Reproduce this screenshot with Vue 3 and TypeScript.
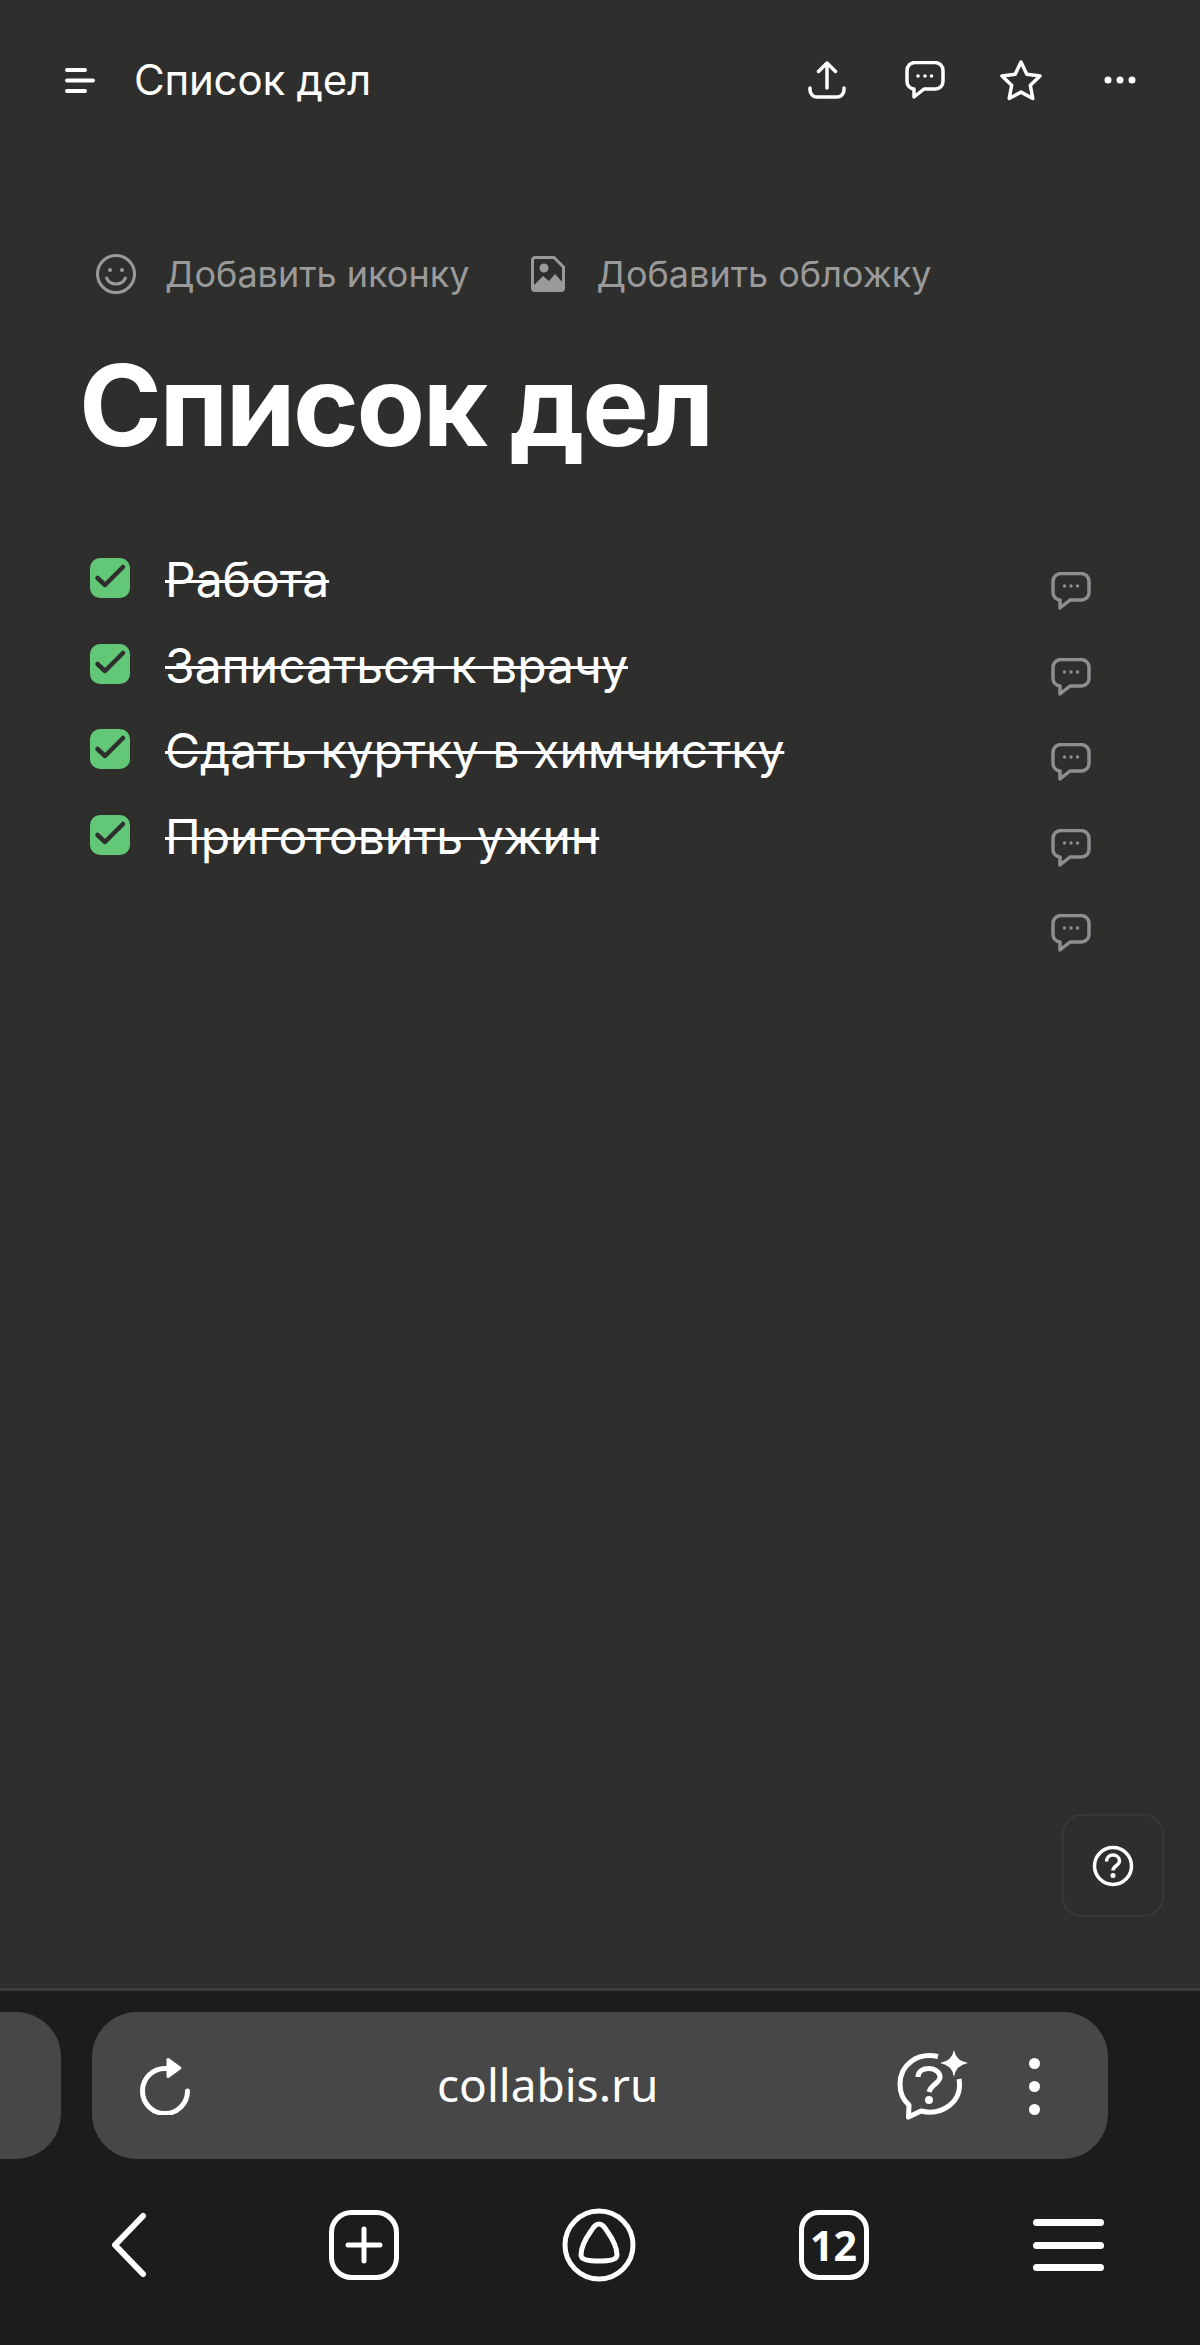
<template>
  <div class="screen">
    <main class="page">
      <header class="topbar">
        <svg class="menu-icon" width="30" height="26" viewBox="0 0 30 26">
          <path d="M2 3h18M2 13.500h26M2 24h18" />
        </svg>
        <span class="topbar-title">Список дел</span>
        <div class="topbar-actions">
          <svg width="38" height="38" viewBox="0 0 38 38" class="line-icon upload">
            <path d="M19 2v25M10.500 10.500 19 2l8.500 8.500M2 27v2a7 7 0 0 0 7 7h20a7 7 0 0 0 7-7v-2" />
          </svg>
          <svg width="40" height="38" viewBox="0 0 40 38" class="line-icon">
            <path d="M10 1.500h20a8 8 0 0 1 8 8v11a7.500 7.500 0 0 1-7.500 7.500H19l-10 8v-8a7.500 7.500 0 0 1-7-7.500v-11a8 8 0 0 1 8-8z" />
            <circle cx="13" cy="15" r="1.800" class="dot" />
            <circle cx="20" cy="15" r="1.800" class="dot" />
            <circle cx="26.500" cy="15" r="1.800" class="dot" />
          </svg>
          <svg width="44" height="42" viewBox="0 0 44 42" class="line-icon star">
            <path d="M22 3l5.800 12.200 13.200 1.800-9.700 9.200 2.500 13.300L22 33.100 10.200 39.500l2.500-13.300L3 17l13.200-1.800z" />
          </svg>
          <svg width="32" height="8" viewBox="0 0 32 8" class="more">
            <circle cx="4" cy="4" r="3.500" class="dot" />
            <circle cx="16" cy="4" r="3.500" class="dot" />
            <circle cx="28" cy="4" r="3.500" class="dot" />
          </svg>
        </div>
      </header>

      <div class="cover-actions">
        <div class="cover-action">
          <svg width="40" height="40" viewBox="0 0 40 40" class="grey-icon">
            <circle cx="20" cy="20" r="18.500" />
            <circle cx="14" cy="16" r="2" class="grey-dot" />
            <circle cx="26" cy="16" r="2" class="grey-dot" />
            <path d="M10.500 24c2 4 5.500 6 9.500 6s7.500-2 9.500-6" />
          </svg>
          <span>Добавить иконку</span>
        </div>
        <div class="cover-action">
          <svg width="34" height="36" viewBox="0 0 34 36" class="grey-icon image-icon">
            <path d="M4 1.500h19L32.500 11v21a2.500 2.500 0 0 1-2.500 2.500H4A2.500 2.500 0 0 1 1.500 32V4A2.500 2.500 0 0 1 4 1.500z" />
            <circle cx="13" cy="12" r="4.500" class="grey-dot" />
            <path class="grey-dot" d="M2 30l10-10 6 5 6-7 8 9v6H2z" />
          </svg>
          <span>Добавить обложку</span>
        </div>
      </div>

      <h1 class="doc-title">Список дел</h1>

      <ul class="tasks">
        <li v-for="(task, i) in tasks" :key="i" class="task">
          <template v-if="task">
            <span class="check">
              <svg width="40" height="40" viewBox="0 0 40 40">
                <path d="M7.500 20l7.500 7L33 9" />
              </svg>
            </span>
            <span class="task-text">{{ task }}</span>
          </template>
          <svg width="40" height="38" viewBox="0 0 40 38" class="comment">
            <path d="M10 1.500h20a8 8 0 0 1 8 8v11a7.500 7.500 0 0 1-7.500 7.500H19l-10 8v-8a7.500 7.500 0 0 1-7-7.500v-11a8 8 0 0 1 8-8z" />
            <circle cx="13.500" cy="14" r="1.700" />
            <circle cx="20" cy="14" r="1.700" />
            <circle cx="26.500" cy="14" r="1.700" />
          </svg>
        </li>
      </ul>

      <button class="help">
        <svg width="42" height="42" viewBox="0 0 42 42">
          <circle cx="21" cy="21" r="18.500" class="help-ring" />
          <path class="help-ring" d="M14.500 16.500c0-4 3-6.500 6.500-6.500s6.500 2.500 6.500 6c0 4.500-6.500 5-6.500 9.500" />
          <circle cx="21" cy="30.500" r="2.500" class="dot" />
        </svg>
      </button>
    </main>

    <footer class="browser">
      <div class="address-row">
        <div class="prev-tab" />
        <div class="address">
          <svg width="50" height="58" viewBox="0 0 50 58" class="reload">
            <path d="M47.500 34A22.500 22.500 0 1 1 25 11.500h3" />
            <path class="solid" d="M26.500 2.500a1.500 1.500 0 0 1 2.400-1.200l11.800 8.500a1.500 1.500 0 0 1 0 2.400L28.900 20.700a1.500 1.500 0 0 1-2.400-1.200z" />
          </svg>
          <span class="url">collabis.ru</span>
          <svg width="72" height="72" viewBox="0 0 72 72" class="ask">
            <path d="M41 6.500C20 2 3 15 3 34c0 9 3 16 9 21l-.5 12L24 61c21 5 42-9 38-32" />
            <path d="M21 27c0-6 5-8.500 11-8.500s11 3.500 11 8.500c0 6-9 7.500-11 15" />
            <circle cx="32" cy="50" r="4" class="solid" />
            <path class="solid" d="M57 0q2 11 14 13-12 2-14 14-2-12-14-14 12-2 14-13z" />
          </svg>
          <div class="kebab">
            <i /><i /><i />
          </div>
        </div>
      </div>

      <nav class="nav">
        <svg width="36" height="66" viewBox="0 0 36 66" class="nav-line nav-back">
          <path d="M32 4 4 33l28 29" />
        </svg>
        <svg width="70" height="70" viewBox="0 0 70 70" class="nav-line nav-thin">
          <rect x="2.500" y="2.500" width="65" height="65" rx="20" />
          <path d="M35 19v32M19 35h32" />
        </svg>
        <svg width="74" height="74" viewBox="0 0 74 74" class="nav-line nav-thin">
          <circle cx="37" cy="37" r="34" />
          <path d="M37 16c3.500 0 5.500 3 8 7 5 7 10 17 10 24 0 5-8 6-18 6s-18-1-18-6c0-7 5-17 10-24 2.500-4 4.500-7 8-7z" />
        </svg>
        <div class="tab-count">12</div>
        <div class="nav-menu">
          <i /><i /><i />
        </div>
      </nav>
    </footer>
  </div>
</template>

<script setup lang="ts">
const tasks: string[] = [
  "Работа",
  "Записаться к врачу",
  "Сдать куртку в химчистку",
  "Приготовить ужин",
  "",
];
</script>

<style scoped>
.screen {
  width: 1200px;
  height: 2345px;
  display: flex;
  flex-direction: column;
  overflow: hidden;
  background: #2e2e2d;
  color: #fff;
  font-family: Inter, "Noto Sans", sans-serif;
}

.page {
  position: relative;
  height: 1988px;
  flex: none;
  background: #2e2e2d;
}

.topbar {
  height: 160px;
  display: flex;
  align-items: center;
  padding: 0 64px 0 65px;
}

.menu-icon path {
  fill: none;
  stroke: #fff;
  stroke-width: 4;
  stroke-linecap: round;
}

.topbar-title {
  margin-left: 39px;
  font-size: 42px;
  line-height: 50px;
  letter-spacing: -0.2px;
}

.topbar-actions {
  margin-left: auto;
  display: flex;
  align-items: center;
  gap: 54px;
}

.upload {
  margin-right: 5px;
}

.more {
  margin-left: 7px;
}

.line-icon path {
  fill: none;
  stroke: #fff;
  stroke-width: 3.5;
  stroke-linecap: round;
  stroke-linejoin: round;
}

.dot {
  fill: #fff;
}

.cover-actions {
  margin: 89px 0 0 96px;
  height: 50px;
  display: flex;
  align-items: center;
  gap: 62px;
  font-size: 36px;
  color: #9a9a9a;
}

.cover-action {
  display: flex;
  align-items: center;
  gap: 29px;
}

.cover-action + .cover-action {
  gap: 31px;
}

.grey-icon circle,
.grey-icon path {
  fill: none;
  stroke: #9a9a9a;
  stroke-width: 3;
  stroke-linecap: round;
}

.grey-icon .grey-dot {
  fill: #9a9a9a;
  stroke: none;
}

.doc-title {
  margin: 38px 0 0 79px;
  font-size: 112px;
  line-height: 136px;
  font-weight: 700;
  letter-spacing: -2.4px;
}

.tasks {
  margin: 77px 109px 0 90px;
  padding: 0;
  list-style: none;
}

.task {
  height: 85.500px;
  display: flex;
  align-items: flex-start;
}

.check {
  width: 40px;
  height: 40px;
  flex: none;
  margin-top: 8px;
  border-radius: 10px;
  background: #62c878;
}

.check svg {
  display: block;
}

.check path {
  fill: none;
  stroke: #2e2e2d;
  stroke-width: 4.500;
  stroke-linecap: round;
  stroke-linejoin: round;
}

.task-text {
  margin: 1px 0 0 35px;
  font-size: 48px;
  line-height: 58px;
  text-decoration: line-through;
  text-decoration-thickness: 3px;
}

.comment {
  margin: 22px 0 0 auto;
  flex: none;
}

.comment path {
  fill: none;
  stroke: #8e8e8e;
  stroke-width: 3.500;
  stroke-linejoin: round;
}

.comment circle {
  fill: #8e8e8e;
}

.help {
  position: absolute;
  left: 1062px;
  top: 1814px;
  width: 102px;
  height: 103px;
  padding: 0;
  border: 2px solid #383838;
  border-radius: 20px;
  background: transparent;
  display: flex;
  align-items: center;
  justify-content: center;
}

.help-ring {
  fill: none;
  stroke: #fff;
  stroke-width: 3.500;
}

.browser {
  flex: 1;
  border-top: 3px solid #3c3c3c;
  background: #1c1c1c;
}

.address-row {
  margin-top: 21px;
  display: flex;
  gap: 31px;
}

.prev-tab {
  width: 61px;
  height: 147px;
  border-radius: 0 45px 45px 0;
  background: #474747;
}

.address {
  width: 1016px;
  height: 147px;
  padding: 0 67px 0 48px;
  box-sizing: border-box;
  border-radius: 45px;
  background: #474747;
  display: flex;
  align-items: center;
}

.reload path {
  fill: none;
  stroke: #fff;
  stroke-width: 5;
  stroke-linecap: round;
}

.reload .solid {
  fill: #fff;
  stroke: none;
}

.url {
  margin-left: 247px;
  width: 220px;
  margin-top: -4px;
  font-family: "Noto Sans", sans-serif;
  font-size: 46px;
  white-space: nowrap;
}

.ask {
  margin-left: 240px;
}

.ask path {
  fill: none;
  stroke: #fff;
  stroke-width: 5;
  stroke-linejoin: round;
}

.ask .solid {
  fill: #fff;
  stroke: none;
}

.kebab {
  margin-left: 60px;
  margin-top: 2px;
  display: flex;
  flex-direction: column;
  gap: 12px;
}

.kebab i {
  width: 11px;
  height: 11px;
  border-radius: 50%;
  background: #fff;
}

.nav {
  margin-top: 49px;
  padding-left: 11px;
  display: grid;
  grid-template-columns: repeat(5, 235px);
  align-items: center;
  justify-items: center;
}

.nav-line circle,
.nav-line rect,
.nav-line path {
  fill: none;
  stroke: #fff;
  stroke-linecap: round;
  stroke-linejoin: round;
}

.nav-back path {
  stroke-width: 6;
}

.nav-thin rect,
.nav-thin circle {
  stroke-width: 5;
}

.nav-thin path {
  stroke-width: 5;
}

.tab-count {
  width: 70px;
  height: 70px;
  box-sizing: border-box;
  border: 5px solid #fff;
  border-radius: 20px;
  display: flex;
  align-items: center;
  justify-content: center;
  font-family: "Noto Sans", sans-serif;
  font-size: 41px;
  font-weight: 700;
}

.nav-menu {
  width: 71px;
  display: flex;
  flex-direction: column;
  gap: 15.500px;
}

.nav-menu i {
  height: 7px;
  border-radius: 4px;
  background: #fff;
}
</style>
